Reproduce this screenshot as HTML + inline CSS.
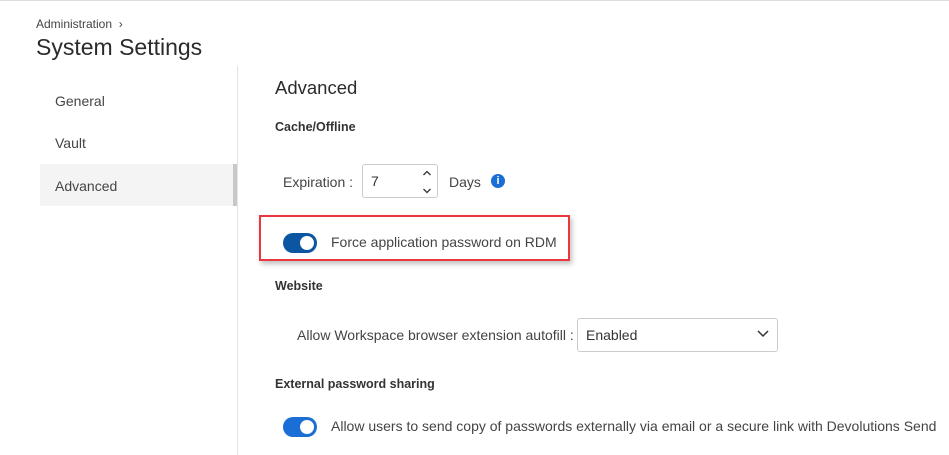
<!DOCTYPE html>
<html><head><style>
body{margin:0;width:949px;height:455px;overflow:hidden;background:#fff;font-family:"Liberation Sans",sans-serif;color:#333;position:relative}
.a{position:absolute;white-space:nowrap}
.tg{position:absolute;width:34px;height:20px;border-radius:10px}
.tg:after{content:"";position:absolute;right:3px;top:3px;width:14px;height:14px;border-radius:50%;background:#fff}
</style></head><body>
<div class="a" style="left:0;top:0;width:949px;height:1px;background:#ddd"></div>
<div class="a" style="left:36px;top:17px;font-size:12px;color:#444">Administration &nbsp;›</div>
<div class="a" style="left:36px;top:34px;font-size:23px;color:#2b2b2b">System Settings</div>
<div class="a" style="left:237px;top:66px;width:1px;height:389px;background:#e3e3e3"></div>
<div class="a" style="left:40px;top:164px;width:197px;height:42px;background:#f4f4f4"></div>
<div class="a" style="left:233px;top:164px;width:4px;height:42px;background:#c8c8c8"></div>
<div class="a" style="left:55px;top:93px;font-size:14px;color:#444">General</div>
<div class="a" style="left:55px;top:135px;font-size:14px;color:#444">Vault</div>
<div class="a" style="left:55px;top:178px;font-size:14px;color:#444">Advanced</div>
<div class="a" style="left:275px;top:77px;font-size:18.5px;color:#2b2b2b">Advanced</div>
<div class="a" style="left:275px;top:120px;font-size:12.5px;font-weight:bold;color:#333">Cache/Offline</div>
<div class="a" style="left:283px;top:174px;font-size:14px;color:#444">Expiration :</div>
<div class="a" style="left:362px;top:164px;width:76px;height:34px;border:1px solid #ccc;border-radius:3px;box-sizing:border-box"></div>
<div class="a" style="left:371px;top:173px;font-size:14px">7</div>
<svg class="a" style="left:422px;top:170px" width="10" height="26"><path d="M1.5 5l3.5-3.5 3.5 3.5M1.5 19l3.5 3.5 3.5-3.5" fill="none" stroke="#333" stroke-width="1.3"/></svg>
<div class="a" style="left:449px;top:174px;font-size:14px;color:#444">Days</div>
<div class="a" style="left:491px;top:174px;width:14px;height:14px;border-radius:50%;background:#1a6fd6;color:#fff;font-size:11px;font-weight:bold;text-align:center;line-height:14px">i</div>
<div class="a" style="left:259px;top:215px;width:311px;height:46px;border:2px solid #e8383d;box-sizing:border-box;box-shadow:2px 3px 5px rgba(0,0,0,.25)"></div>
<div class="tg" style="left:283px;top:233px;background:#0b55a3"></div>
<div class="a" style="left:331px;top:234px;font-size:14px;color:#444">Force application password on RDM</div>
<div class="a" style="left:275px;top:279px;font-size:12.5px;font-weight:bold;color:#333">Website</div>
<div class="a" style="left:297px;top:327px;font-size:14px;color:#444">Allow Workspace browser extension autofill :</div>
<div class="a" style="left:577px;top:318px;width:201px;height:34px;border:1px solid #ccc;border-radius:3px;box-sizing:border-box"></div>
<div class="a" style="left:586px;top:327px;font-size:14px;color:#333">Enabled</div>
<svg class="a" style="left:757px;top:330px" width="12" height="8"><path d="M1 1l5 5 5-5" fill="none" stroke="#333" stroke-width="1.5"/></svg>
<div class="a" style="left:275px;top:377px;font-size:12.5px;font-weight:bold;color:#333">External password sharing</div>
<div class="tg" style="left:283px;top:417px;background:#1a6fd6"></div>
<div class="a" style="left:331px;top:418px;font-size:14px;color:#444">Allow users to send copy of passwords externally via email or a secure link with Devolutions Send</div>
</body></html>
